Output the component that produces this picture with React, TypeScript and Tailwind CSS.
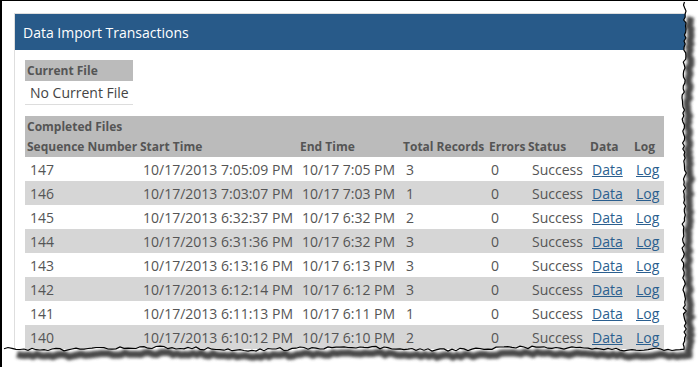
import React from "react";

const rows = [
  ["147", "10/17/2013 7:05:09 PM", "10/17 7:05 PM", "3"],
  ["146", "10/17/2013 7:03:07 PM", "10/17 7:03 PM", "1"],
  ["145", "10/17/2013 6:32:37 PM", "10/17 6:32 PM", "2"],
  ["144", "10/17/2013 6:31:36 PM", "10/17 6:32 PM", "3"],
  ["143", "10/17/2013 6:13:16 PM", "10/17 6:13 PM", "3"],
  ["142", "10/17/2013 6:12:14 PM", "10/17 6:12 PM", "3"],
  ["141", "10/17/2013 6:11:13 PM", "10/17 6:11 PM", "1"],
  ["140", "10/17/2013 6:10:12 PM", "10/17 6:10 PM", "2"],
];

const headers = ["Sequence Number", "Start Time", "End Time", "Total Records", "Errors", "Status", "Data", "Log"];

function makeEdge() {
  let seed = 12345;
  const rnd = () => {
    seed = (seed * 1103515245 + 12345) % 2147483648;
    return seed / 2147483648;
  };
  const pts: [number, number][] = [];
  for (let y = 0; y <= 346; y += 3) {
    const x = 680 + Math.sin(y / 23) * 1 + (rnd() - 0.5) * 3.2;
    pts.push([x, y]);
  }
  for (let x = 680; x >= 0; x -= 4) {
    const y = 346.5 + Math.sin(x / 31) * 1.2 + (rnd() - 0.5) * 3;
    pts.push([x, y]);
  }
  return pts;
}

const edge = makeEdge();
const edgeD = edge.map((p, i) => `${i === 0 ? "M" : "L"}${p[0].toFixed(1)} ${p[1].toFixed(1)}`).join(" ");
const outsideD = `M698 0 L${edge[0][0].toFixed(1)} 0 ` + edge.map((p) => `L${p[0].toFixed(1)} ${p[1].toFixed(1)}`).join(" ") + " L0 367 L698 367 Z";
const shadowD = edge
  .filter((p) => p[1] > 6 && p[0] > 4)
  .map((p, i) => `${i === 0 ? "M" : "L"}${(p[0] + 5).toFixed(1)} ${(p[1] + 6).toFixed(1)}`)
  .join(" ");

export default function App() {
  return (
    <div
      className="relative w-[698px] h-[367px] overflow-hidden bg-white border-l-2 border-t border-black"
      style={{ fontFamily: '"Open Sans", "Noto Sans", sans-serif' }}
    >
      <div className="ml-[12px] mt-[12px] border-t border-l border-[#dedede] w-[700px]">
        <div className="h-[36px] bg-[#285a89] flex items-center pl-[8px] text-[14px] text-white">
          Data Import Transactions
        </div>
        <div className="pl-[10px] pt-[10px]">
          <div className="w-[108px]">
            <div className="h-[21px] bg-[#bbbbbb] text-[12px] font-bold text-[#555] pl-[2px] flex items-center">
              Current File
            </div>
            <div className="h-[24px] border-b border-[#dddddd] text-[14px] text-[#444] pl-[5px] flex items-center">
              No Current File
            </div>
          </div>
          <div className="mt-[11px] w-[639px]">
            <div className="bg-[#bbbbbb]">
              <div className="h-[20px] text-[12px] font-bold text-[#555] pl-[2px] pt-[1px] flex items-center">
                Completed Files
              </div>
              <div className="h-[21px] grid grid-cols-[113px_160px_103px_86px_39px_62px_44px_32px] text-[12px] font-bold text-[#555]">
                {headers.map((h) => (
                  <div key={h} className="pl-[2px] pt-[1px] flex items-center whitespace-nowrap">
                    {h}
                  </div>
                ))}
              </div>
            </div>
            {rows.map((r, i) => (
              <div
                key={r[0]}
                className={`h-[24px] grid grid-cols-[113px_160px_103px_86px_39px_62px_44px_32px] text-[14px] text-[#555] ${
                  i % 2 === 1 ? "bg-[#d6d6d6]" : "bg-white"
                }`}
              >
                <div className="pl-[5px] flex items-center">{r[0]}</div>
                <div className="pl-[5px] flex items-center whitespace-nowrap">{r[1]}</div>
                <div className="pl-[4px] flex items-center whitespace-nowrap">{r[2]}</div>
                <div className="pl-[5px] flex items-center">{r[3]}</div>
                <div className="pl-[4px] flex items-center">0</div>
                <div className="pl-[6px] flex items-center">Success</div>
                <div className="pl-[4px] flex items-center">
                  <a href="#" className="text-[#2b5f8f] underline">Data</a>
                </div>
                <div className="pl-[4px] flex items-center">
                  <a href="#" className="text-[#2b5f8f] underline">Log</a>
                </div>
              </div>
            ))}
          </div>
        </div>
      </div>
      <svg className="absolute left-0 top-0 pointer-events-none" width="698" height="367" viewBox="-2 -1 698 367">
        <defs>
          <filter id="blur" x="-10%" y="-10%" width="120%" height="120%">
            <feGaussianBlur stdDeviation="1.6" />
          </filter>
          <clipPath id="outside">
            <path d={outsideD} />
          </clipPath>
        </defs>
        <path d={outsideD} fill="#ffffff" />
        <g clipPath="url(#outside)">
          <path d={shadowD} fill="none" stroke="#4a4a4a" strokeWidth="7" filter="url(#blur)" />
        </g>
        <path d={edgeD} fill="none" stroke="#000" strokeWidth="1.2" />
      </svg>
    </div>
  );
}
